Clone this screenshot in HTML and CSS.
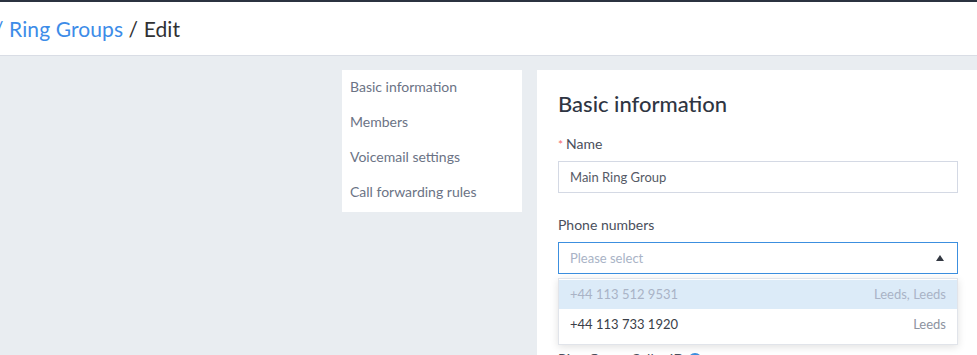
FILE: index.html
```html
<!DOCTYPE html>
<html lang="en">
<head>
  <meta charset="UTF-8">
  <title>Ring Groups / Edit</title>
  <link rel="stylesheet" href="styles.css">
</head>
<body>
  <div class="topbar"></div>
  <header class="header">
    <div class="crumbs"><span class="link">/ Ring Groups</span> / Edit</div>
  </header>

  <div class="page">
    <nav class="side">
      <a class="side-item">Basic information</a>
      <a class="side-item">Members</a>
      <a class="side-item">Voicemail settings</a>
      <a class="side-item">Call forwarding rules</a>
    </nav>

    <main class="card">
      <h2 class="card-title">Basic information</h2>

      <div class="form-item">
        <label class="label"><span class="req">*</span>Name</label>
        <div class="input">Main Ring Group</div>
      </div>

      <div class="form-item">
        <label class="label">Phone numbers</label>
        <div class="select-wrap">
          <div class="input focus">
            <span class="placeholder">Please select</span>
            <span class="arrow"></span>
          </div>
          <ul class="dropdown">
            <li class="option hover"><span>+44 113 512 9531</span><span class="city">Leeds, Leeds</span></li>
            <li class="option"><span>+44 113 733 1920</span><span class="city">Leeds</span></li>
          </ul>
        </div>
      </div>

      <div class="form-item gap">
        <label class="label">Ring Group Caller ID <span class="info">?</span></label>
      </div>
    </main>
  </div>
</body>
</html>
```

FILE: styles.css
```css
* {
  box-sizing: border-box;
}

body {
  margin: 0;
  font-family: "Lato", "Noto Sans", sans-serif;
  background: #e9edf1;
  color: #303133;
  overflow: hidden;
}

.topbar {
  height: 2px;
  background: #2b3240;
}

.header {
  height: 54px;
  background: #ffffff;
  border-bottom: 1px solid #d9dde5;
  display: flex;
  align-items: center;
}

.crumbs {
  font-size: 21px;
  margin-left: -6px;
  letter-spacing: 0.1px;
  color: #303133;
}

.crumbs .link {
  color: #3d8ce8;
}

.page {
  display: flex;
  align-items: flex-start;
  gap: 15px;
  padding: 14px 0 0 342px;
}

/* Menu de seções */
.side {
  width: 180px;
  background: #ffffff;
  display: flex;
  flex-direction: column;
  padding: 0 0 2px;
}

.side-item {
  display: block;
  padding: 0 8px;
  height: 35px;
  line-height: 34px;
  font-size: 14px;
  color: #6b7385;
}

.card {
  flex: 1;
  background: #ffffff;
  padding: 20px 19px 0 21px;
  min-height: 300px;
}

.card-title {
  margin: 0 0 17px;
  font-size: 22px;
  font-weight: 500;
  color: #2f3542;
}

.form-item {
  margin-bottom: 22px;
}

.label {
  display: block;
  font-size: 14px;
  color: #4a4f5c;
  height: 27px;
  line-height: 20px;
}

.req {
  color: #f56c6c;
  margin-right: 3px;
  font-size: 12px;
}

.input {
  height: 32px;
  border: 1px solid #d4d9e4;
  padding: 0 11px;
  font-size: 13px;
  line-height: 30px;
  color: #555a66;
  display: flex;
  justify-content: space-between;
  align-items: center;
}

.input.focus {
  border-color: #3c8fdf;
}

.placeholder {
  color: #a9b3c6;
}

.arrow {
  width: 0;
  height: 0;
  border-left: 4px solid transparent;
  border-right: 4px solid transparent;
  border-bottom: 6px solid #333842;
  margin-right: 2px;
}

.select-wrap {
  position: relative;
}

.dropdown {
  position: absolute;
  top: 36px;
  left: 0;
  right: 0;
  margin: 0;
  padding: 1px 0 4px;
  list-style: none;
  background: #ffffff;
  border: 1px solid #e1e4ea;
  box-shadow: 0 2px 8px rgba(0, 0, 0, 0.12);
  z-index: 2;
}

.option {
  display: flex;
  justify-content: space-between;
  height: 29px;
  line-height: 29px;
  padding: 0 11px 0 11px;
  font-size: 13px;
  color: #3a3e48;
}

.option + .option {
  height: 31px;
  line-height: 31px;
}

.option .city {
  color: #8d93a0;
}

.option.hover {
  background: #dcebf8;
  color: #a9b3c6;
}

.option.hover .city {
  color: #a9b3c6;
}

.gap {
  margin-top: 75px;
}

.info {
  display: inline-block;
  width: 14px;
  height: 14px;
  border-radius: 50%;
  background: #3c8fdf;
  color: #ffffff;
  font-size: 10px;
  text-align: center;
  line-height: 14px;
}
```
